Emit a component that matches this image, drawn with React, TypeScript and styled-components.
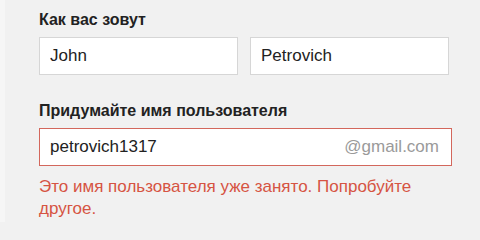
import styled, { createGlobalStyle } from 'styled-components'

const GlobalStyle = createGlobalStyle`
  html, body {
    margin: 0;
    padding: 0;
    background: #f1f1f1;
    min-height: 100%;
  }
  body {
    font-family: "Liberation Sans", Arial, sans-serif;
    color: #222;
  }
`

const Page = styled.main`
  width: 480px;
  height: 222px;
  box-sizing: border-box;
  border-left: 5px solid #f6f6f6;
  padding: 11px 0 0 34px;
  overflow: hidden;
`

const Form = styled.div`
  width: 413px;
`

const Label = styled.label<{ $gap?: number }>`
  display: block;
  font-size: 16px;
  line-height: 18px;
  font-weight: bold;
  color: #222;
  margin-top: ${(p) => p.$gap ?? 0}px;
  margin-bottom: 8px;
`

const Row = styled.div`
  display: flex;
  gap: 12px;
`

const Box = styled.div<{ $error?: boolean; $width: number }>`
  width: ${(p) => p.$width}px;
  height: 38px;
  box-sizing: border-box;
  display: flex;
  align-items: center;
  background: #fff;
  border: 1px solid ${(p) => (p.$error ? '#d3675c' : '#d6d6d6')};
  padding: 0 12px 0 10px;
`

const Field = styled.input`
  flex: 1;
  min-width: 0;
  border: none;
  outline: none;
  background: transparent;
  padding: 0;
  font-family: "Liberation Sans", Arial, sans-serif;
  font-size: 17px;
  color: #222;
`

const Suffix = styled.span`
  font-size: 17px;
  color: #9a9a9a;
`

const Error = styled.p`
  margin: 10px 0 0;
  font-size: 17px;
  line-height: 22px;
  color: #d65443;
`

export default function App() {
  return (
    <>
      <GlobalStyle />
      <Page>
        <Form>
          <Label>Как вас зовут</Label>
          <Row>
            <Box $width={199}>
              <Field readOnly defaultValue="John" />
            </Box>
            <Box $width={199}>
              <Field readOnly defaultValue="Petrovich" />
            </Box>
          </Row>
          <Label $gap={27}>Придумайте имя пользователя</Label>
          <Box $error $width={413}>
            <Field readOnly defaultValue="petrovich1317" />
            <Suffix>@gmail.com</Suffix>
          </Box>
          <Error>Это имя пользователя уже занято. Попробуйте другое.</Error>
        </Form>
      </Page>
    </>
  )
}
